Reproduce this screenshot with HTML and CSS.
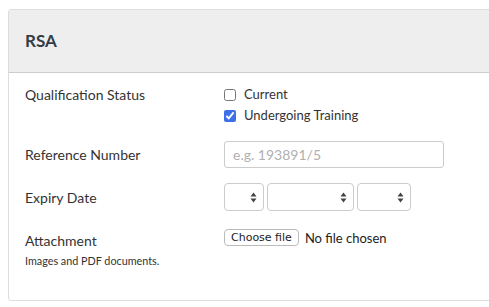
FILE: index.html
```html
<!DOCTYPE html>
<html lang="en">

<head>
    <meta charset="UTF-8">
    <meta name="viewport" content="width=device-width, initial-scale=1.0">
    <title>RSA</title>
    <link rel="stylesheet" href="styles.css">
</head>

<body>
    <div class="panel">
        <div class="panel-heading">
            <h3>RSA</h3>
        </div>
        <div class="panel-body">
            <div class="form-row">
                <div class="form-label">Qualification Status</div>
                <div class="form-field checks">
                    <label class="check"><input type="checkbox"> Current</label>
                    <label class="check"><input type="checkbox" checked> Undergoing Training</label>
                </div>
            </div>
            <div class="form-row centered">
                <label class="form-label" for="refNumber">Reference Number</label>
                <div class="form-field">
                    <input type="text" id="refNumber" class="text-input" placeholder="e.g. 193891/5">
                </div>
            </div>
            <div class="form-row centered date-row">
                <div class="form-label">Expiry Date</div>
                <div class="form-field selects">
                    <span class="select-wrap day">
                        <select></select>
                        <svg class="arrows" width="7" height="11" viewBox="0 0 7 11"><path d="M3.5 0.5 L6.5 4.5 H0.5 Z M3.5 10.5 L6.5 6.5 H0.5 Z" fill="#444"/></svg>
                    </span>
                    <span class="select-wrap month">
                        <select></select>
                        <svg class="arrows" width="7" height="11" viewBox="0 0 7 11"><path d="M3.5 0.5 L6.5 4.5 H0.5 Z M3.5 10.5 L6.5 6.5 H0.5 Z" fill="#444"/></svg>
                    </span>
                    <span class="select-wrap year">
                        <select></select>
                        <svg class="arrows" width="7" height="11" viewBox="0 0 7 11"><path d="M3.5 0.5 L6.5 4.5 H0.5 Z M3.5 10.5 L6.5 6.5 H0.5 Z" fill="#444"/></svg>
                    </span>
                </div>
            </div>
            <div class="form-row">
                <div class="form-label attach-label">
                    Attachment
                    <div class="help-text">Images and PDF documents.</div>
                </div>
                <div class="form-field file-field">
                    <label class="file-button">Choose file<input type="file" hidden></label>
                    <span class="file-name">No file chosen</span>
                </div>
            </div>
        </div>
    </div>
</body>

</html>
```

FILE: styles.css
```css
html {
    overflow: hidden;
}

body {
    font-family: Lato, 'Open Sans', sans-serif;
    margin: 9px 0 0 8px;
    background-color: #fff;
    color: #333;
    font-size: 14px;
}

.panel {
    width: 500px;
    border: 1px solid #ddd;
    border-radius: 3px;
    background-color: #fff;
}

.panel-heading {
    background-color: #eee;
    border-bottom: 1px solid #ccc;
    padding: 21px 16px;
}

.panel-heading h3 {
    margin: 0;
    font-size: 17px;
    line-height: 20px;
    font-weight: bold;
    color: #333d47;
}

.panel-body {
    padding: 11px 16px 32px;
}

.form-row {
    display: grid;
    grid-template-columns: 199px 1fr;
    margin-bottom: 15px;
}

.form-row.date-row {
    margin-bottom: 18px;
}

.form-row:last-child {
    margin-bottom: 0;
}

.form-row.centered {
    align-items: center;
}

.form-label {
    line-height: 21px;
}

.attach-label {
    padding-top: 1px;
}

.help-text {
    font-size: 10.8px;
    line-height: 14px;
    margin-top: 3px;
}

.checks {
    display: flex;
    flex-direction: column;
}

.check {
    display: flex;
    align-items: center;
    font-size: 13px;
    line-height: 21px;
}

.check input {
    width: 12px;
    height: 12px;
    margin: 0 8px 0 0;
    accent-color: #3e6ee8;
}

.text-input {
    box-sizing: border-box;
    width: 220px;
    height: 27px;
    padding: 0 8px;
    border: 1px solid #ccc;
    border-radius: 3px;
    font-family: inherit;
    font-size: 14px;
    color: #333;
}

.text-input::placeholder {
    color: #b0b0b0;
}

.selects {
    display: flex;
    gap: 3px;
}

.select-wrap {
    position: relative;
    display: inline-block;
}

.select-wrap select {
    appearance: none;
    box-sizing: border-box;
    height: 28px;
    border: 1px solid #ccc;
    border-radius: 4px;
    background-color: #fff;
}

.select-wrap.day select {
    width: 40px;
}

.select-wrap.month select {
    width: 87px;
}

.select-wrap.year select {
    width: 54px;
}

.select-wrap .arrows {
    position: absolute;
    right: 7px;
    top: 9px;
    pointer-events: none;
}

.file-field {
    display: flex;
    align-items: center;
    gap: 6px;
    height: 17px;
}

.file-button {
    box-sizing: border-box;
    height: 17px;
    padding: 0 6px;
    border: 1px solid #bbb;
    border-radius: 4px;
    font-family: 'DejaVu Sans', sans-serif;
    font-size: 11px;
    line-height: 15px;
    color: #222;
    background-color: #fff;
}

.file-name {
    font-size: 13px;
    color: #222;
}
```
